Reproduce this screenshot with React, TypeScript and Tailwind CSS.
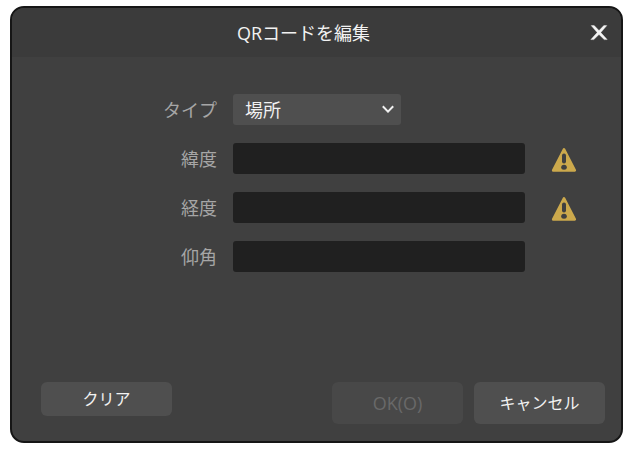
function WarningIcon() {
    return (
        <svg
            viewBox="0 0 26 26"
            className="w-[26px] h-[26px]"
            role="img"
            aria-hidden="true"
        >
            <path
                d="M13 3.4 23.8 24.4H2.2Z"
                fill="#cca94c"
                stroke="#cca94c"
                strokeWidth="2.6"
                strokeLinejoin="round"
            />
            <rect x="11" y="7.4" width="4" height="10" rx="2" fill="#404040" />
            <ellipse cx="13" cy="21.2" rx="2.8" ry="2.5" fill="#404040" />
        </svg>
    );
}

const fields = [
    { id: "latitude", label: "緯度", warning: true },
    { id: "longitude", label: "経度", warning: true },
    { id: "elevation", label: "仰角", warning: false },
];

export default function App() {
    return (
        <div className="min-h-screen flex bg-white pt-[6px] pb-[6px] pl-[10px] pr-[9px] font-['Open_Sans','Noto_Sans_CJK_JP',sans-serif]">
            <div
                role="dialog"
                aria-labelledby="dialog-title"
                className="flex-1 flex flex-col bg-[#404040] border-2 border-[#161616] rounded-[14px] overflow-hidden"
            >
                <header className="h-[49px] flex items-center pl-[10px] pr-2 bg-[#3b3b3b]">
                    <h1
                        id="dialog-title"
                        className="flex-1 text-center text-[18px] leading-6 text-[#f2f2f2]"
                    >
                        QRコードを編集
                    </h1>
                    <button
                        type="button"
                        aria-label="閉じる"
                        className="w-7 h-7 flex items-center justify-center"
                    >
                        <svg viewBox="0 0 18 16" className="w-[18px] h-4">
                            <path
                                d="M1.2 0.6H4.2L9 5.6 13.8 0.6H16.8L10.8 7.6 17.2 14.6H14.2L9 9.5 3.8 14.6H0.8L7.2 7.6Z"
                                fill="#f4f4f4"
                                stroke="#f4f4f4"
                                strokeWidth="0.4"
                            />
                        </svg>
                    </button>
                </header>

                <form className="flex-1 flex flex-col justify-between pt-[37px]">
                    <div className="flex flex-col gap-[18px] text-[18px] leading-6">
                        <div className="grid grid-cols-[205px_1fr_80px] gap-x-4 items-center">
                            <label
                                htmlFor="type"
                                className="text-right text-[#a6a6a6]"
                            >
                                タイプ
                            </label>
                            <div className="relative w-[168px]">
                                <select
                                    id="type"
                                    className="appearance-none block w-full h-[31px] pl-3 pr-8 rounded-[3px] bg-[#4f4f4f] text-[#f2f2f2]"
                                >
                                    <option>場所</option>
                                </select>
                                <svg
                                    viewBox="0 0 12 8"
                                    className="absolute right-[7px] top-[11px] w-3 h-2 pointer-events-none"
                                >
                                    <path
                                        d="M0.8 1.2 6 6.6 11.2 1.2"
                                        stroke="#f0f0f0"
                                        strokeWidth="2"
                                        fill="none"
                                    />
                                </svg>
                            </div>
                        </div>

                        {fields.map((field) => (
                            <div
                                key={field.id}
                                className="grid grid-cols-[205px_1fr_80px] gap-x-4 items-center"
                            >
                                <label
                                    htmlFor={field.id}
                                    className="text-right text-[#a6a6a6]"
                                >
                                    {field.label}
                                </label>
                                <input
                                    id={field.id}
                                    type="text"
                                    className="w-full h-[31px] px-2 rounded-[3px] bg-[#202020] text-[#f2f2f2]"
                                />
                                <div className="pl-[10px]">
                                    {field.warning && <WarningIcon />}
                                </div>
                            </div>
                        ))}
                    </div>

                    <div className="flex items-start justify-between pl-[29px] pr-4 pb-[17px] text-[16px] leading-6 text-[#f2f2f2]">
                        <button
                            type="button"
                            className="w-[131px] h-[34px] rounded-md bg-[#4f4f4f]"
                        >
                            クリア
                        </button>
                        <div className="flex gap-[11px]">
                            <button
                                type="submit"
                                disabled
                                className="w-[131px] h-[42px] rounded-md bg-[#484848] text-[18px] text-[#696969]"
                            >
                                OK(O)
                            </button>
                            <button
                                type="button"
                                className="w-[131px] h-[42px] rounded-md bg-[#4f4f4f]"
                            >
                                キャンセル
                            </button>
                        </div>
                    </div>
                </form>
            </div>
        </div>
    );
}
